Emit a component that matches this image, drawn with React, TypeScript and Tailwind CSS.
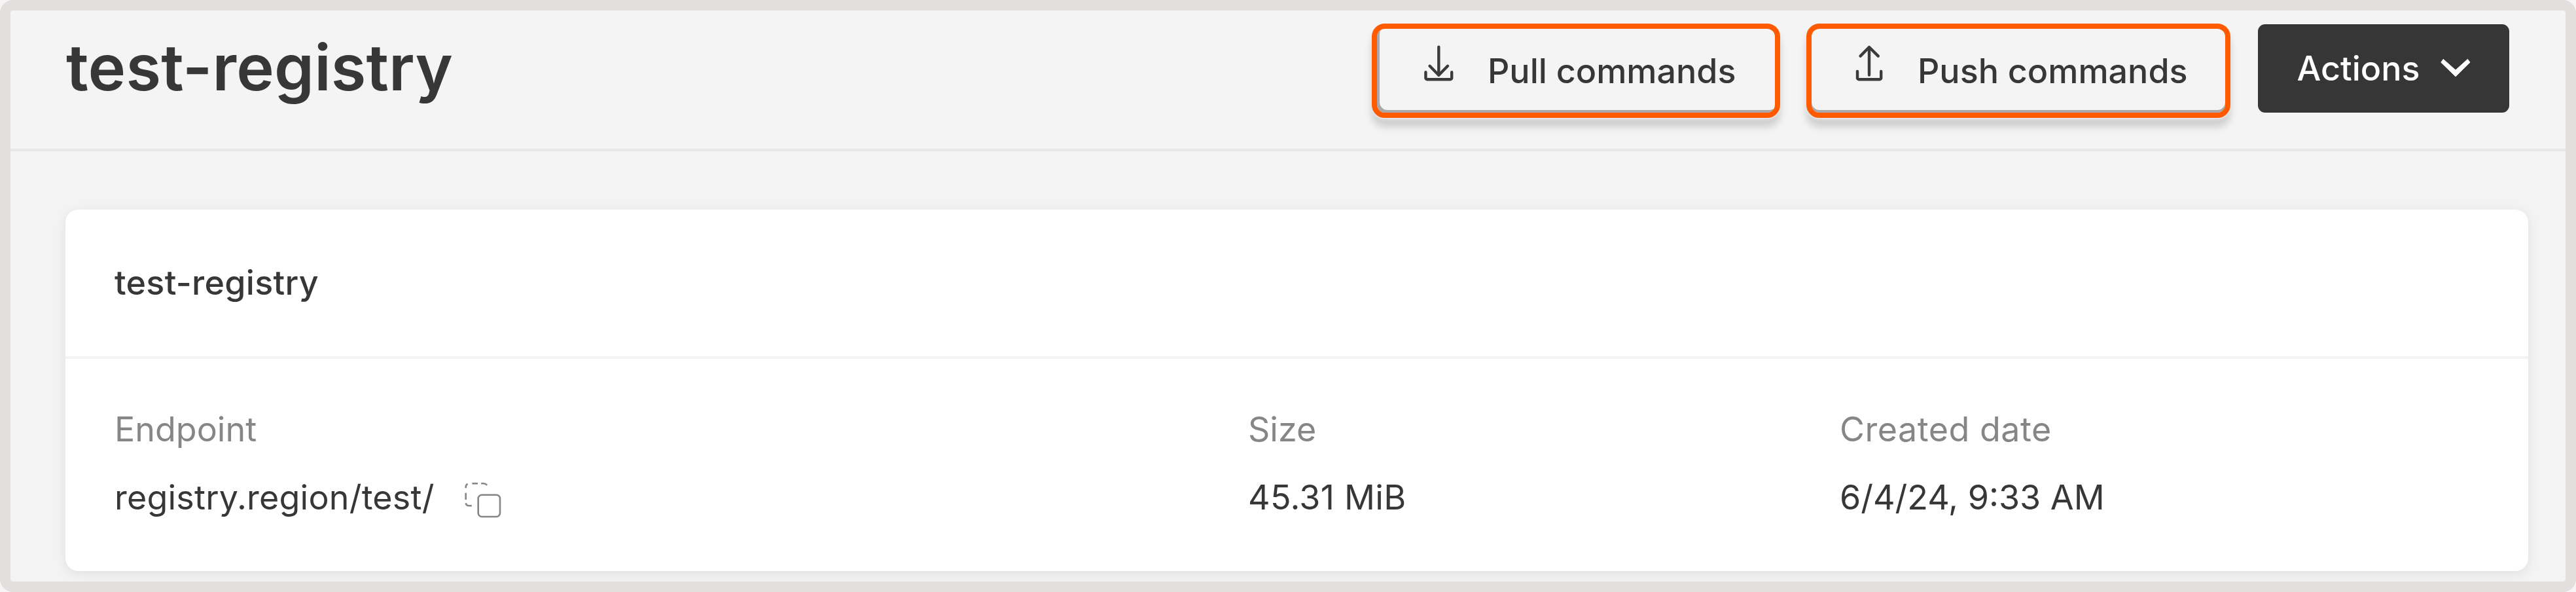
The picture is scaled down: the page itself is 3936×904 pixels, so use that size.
function PullIcon() {
  return (
    <svg
      className="mb-6 h-[60px] w-[52px] shrink-0"
      viewBox="0 0 52 60"
      fill="none"
      stroke="#3b3b3b"
      strokeWidth="4.4"
      strokeLinecap="round"
      strokeLinejoin="round"
    >
      <path d="M26.3 5.8V48.5" />
      <path d="M12.6 34.8L26.3 48.8L40 34.8" />
      <path d="M6.4 44.2V53A2.2 2.2 0 0 0 8.6 55.2H44A2.2 2.2 0 0 0 46.2 53V44.2" />
    </svg>
  );
}

function PushIcon() {
  return (
    <svg
      className="mb-6 h-[60px] w-[52px] shrink-0"
      viewBox="0 0 52 60"
      fill="none"
      stroke="#3b3b3b"
      strokeWidth="4.4"
      strokeLinecap="round"
      strokeLinejoin="round"
    >
      <path d="M26 6.5V48.5" />
      <path d="M12.6 19.6L26 6L39.8 19.6" />
      <path d="M8 43V53A2.2 2.2 0 0 0 10.2 55.2H42A2.2 2.2 0 0 0 44.2 53V43" />
    </svg>
  );
}

function ChevronIcon() {
  return (
    <svg className="h-8 w-12 shrink-0" viewBox="0 0 48 32">
      <path
        d="M5.2 2.4L24 19.1L42.4 2.4L46 7.2L24 28.8L1.8 7.2Z"
        fill="#ffffff"
        stroke="#ffffff"
        strokeWidth="1"
        strokeLinejoin="round"
      />
    </svg>
  );
}

function CopyIcon() {
  return (
    <svg
      className="mt-2 h-[60px] w-[60px] shrink-0"
      viewBox="0 0 60 60"
      fill="none"
      stroke="#868686"
      strokeWidth="2.6"
    >
      <rect x="23.7" y="21.7" width="33.3" height="33.3" rx="5.5" />
      <path d="M4.7 11.2V9.6A5.3 5.3 0 0 1 7.6 4.8" />
      <path d="M14.4 4.3H23" />
      <path d="M28.2 4.3H31.5A8 8 0 0 1 37.2 6.8" />
      <path d="M4.7 18.7V29" />
      <path d="M4.7 34.2A5 5 0 0 0 9.7 38.3H13.8" />
    </svg>
  );
}

export default function App() {
  return (
    <div className="h-[904px] w-[3936px] bg-[#f5f5f5] font-['Inter',sans-serif] text-[52px] leading-[64px] text-[#373737]">
      <div className="flex h-full w-full flex-col overflow-hidden rounded-[20px] border-16 border-[#e3dfde] bg-[#f3f3f3]">
        <header className="flex h-[215px] shrink-0 items-start justify-between border-b-4 border-[#e8e8e8] bg-[#f4f4f4] pr-[86px] pl-[85px]">
          <h1 className="mt-[27px] text-[97.5px] leading-[120px] font-semibold tracking-[0.15px]">
            test-registry
          </h1>
          <div className="flex items-start">
            <button className="mt-5 flex h-36 w-[624px] items-center gap-[49px] rounded-[20px] border-8 border-[#ff5a00] pl-[68px] font-medium whitespace-nowrap shadow-[inset_4px_-4px_0_0_#a8a8a8,0_4px_4px_-2px_#f2f2f2,0_14px_12px_0_rgba(0,0,0,0.16)]">
              <PullIcon />
              <span className="pt-px">Pull commands</span>
            </button>
            <button className="mt-5 ml-10 flex h-36 w-[648px] items-center gap-[48px] rounded-[20px] border-8 border-[#ff5a00] pl-[62px] font-medium whitespace-nowrap shadow-[inset_0_-4px_0_0_#a8a8a8,0_4px_4px_-2px_#f2f2f2,0_14px_12px_0_rgba(0,0,0,0.16)]">
              <PushIcon />
              <span className="pt-px">Push commands</span>
            </button>
            <button className="mt-[21px] ml-[41.5px] flex h-[134.5px] w-[384.5px] items-center justify-between rounded-[11px] bg-[#363636] pr-[58px] pl-[60px] font-medium text-white">
              <span className="pt-px">Actions</span>
              <ChevronIcon />
            </button>
          </div>
        </header>

        <main className="pt-[89px] pr-[57px] pl-[84px]">
          <section className="h-[552px] rounded-[20px] bg-white shadow-[0_4px_18px_rgba(0,0,0,0.08)]">
            <h2 className="flex h-[228px] items-center border-b-4 border-[#f3f3f3] pl-[75px] font-medium tracking-[0.3px]">
              test-registry
            </h2>
            <dl className="grid grid-cols-[1732px_904px_1fr] pt-[76px] pl-[75px]">
              <div className="flex flex-col gap-10">
                <dt className="text-[#868686]">Endpoint</dt>
                <dd className="flex h-16 items-center gap-[43px]">
                  <span className="tracking-[0.2px]">registry.region/test/</span>
                  <CopyIcon />
                </dd>
              </div>
              <div className="flex flex-col gap-10">
                <dt className="text-[#868686]">Size</dt>
                <dd className="tracking-[0.3px]">45.31 MiB</dd>
              </div>
              <div className="flex flex-col gap-10">
                <dt className="tracking-[0.5px] text-[#868686]">Created date</dt>
                <dd>6/4/24, 9:33 AM</dd>
              </div>
            </dl>
          </section>
        </main>
      </div>
    </div>
  );
}
